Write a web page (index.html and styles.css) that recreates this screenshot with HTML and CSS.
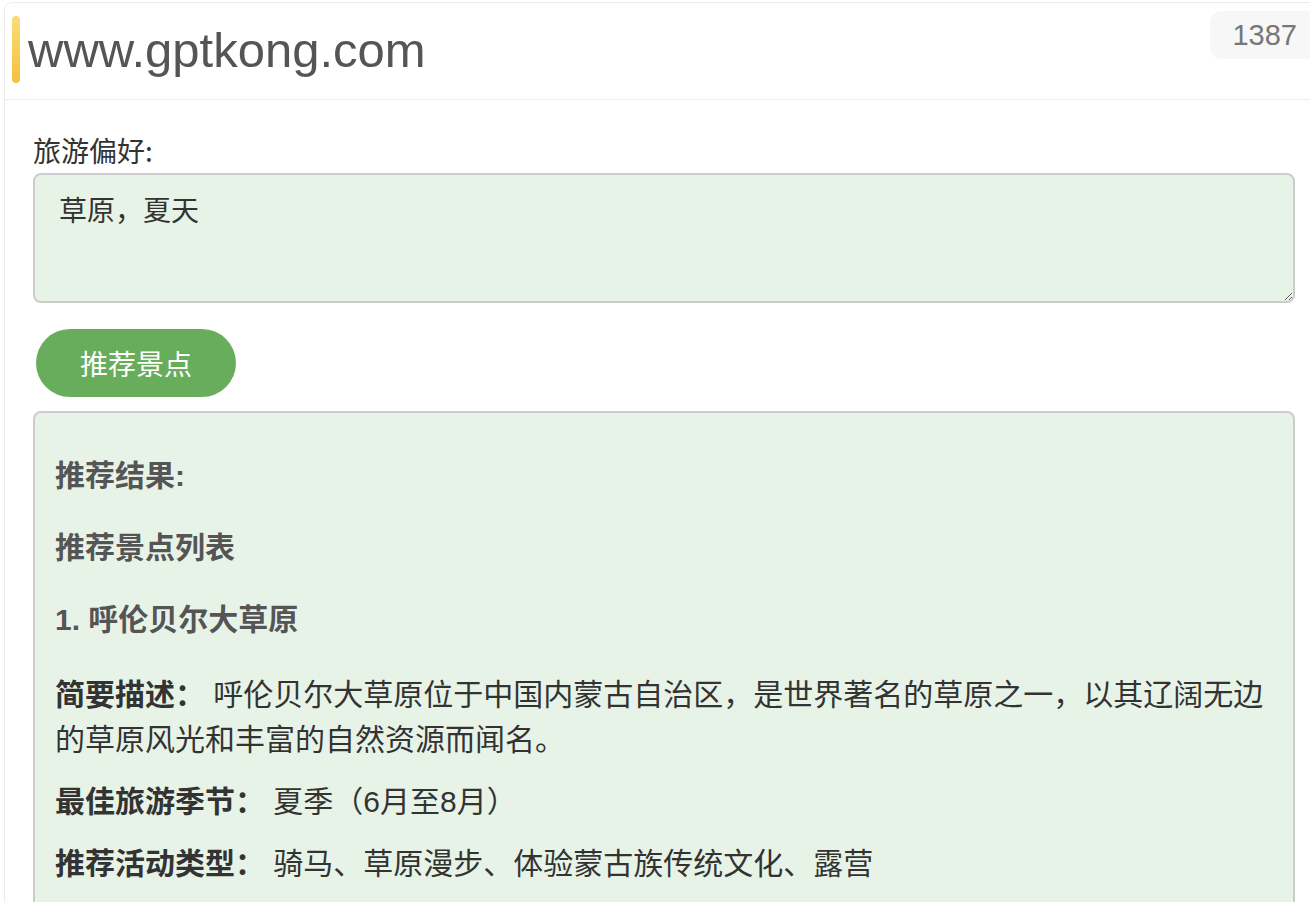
FILE: index.html
```html
<!DOCTYPE html>
<html lang="zh-CN">
<head>
<meta charset="utf-8">
<title>www.gptkong.com</title>
<link rel="stylesheet" href="styles.css">
</head>
<body>
<div class="card">
  <header class="card-header">
    <span class="accent-bar"></span>
    <h1 class="site-title">www.gptkong.com</h1>
    <span class="view-count">1387</span>
  </header>
  <main class="card-body">
    <label class="field-label" for="pref">旅游偏好:</label>
    <textarea id="pref" class="pref-input">草原，夏天</textarea>
    <button class="submit-btn" type="button">推荐景点</button>
    <section class="result-box">
      <p class="result-heading">推荐结果:</p>
      <p class="result-heading">推荐景点列表</p>
      <p class="result-heading item-title">1. 呼伦贝尔大草原</p>
      <ul class="detail-list">
        <li class="detail-row"><strong class="detail-label">简要描述：</strong> 呼伦贝尔大草原位于中国内蒙古自治区，是世界著名的草原之一，以其辽阔无边的草原风光和丰富的自然资源而闻名。</li>
        <li class="detail-row"><strong class="detail-label">最佳旅游季节：</strong> 夏季（6月至8月）</li>
        <li class="detail-row"><strong class="detail-label">推荐活动类型：</strong> 骑马、草原漫步、体验蒙古族传统文化、露营</li>
      </ul>
    </section>
  </main>
</div>
</body>
</html>
```

FILE: styles.css
```css
html, body {
  margin: 0;
  padding: 0;
  overflow: hidden;
  background: #ffffff;
}

body {
  font-family: "Liberation Sans", "Noto Sans CJK SC", sans-serif;
  color: #333333;
}

.card {
  position: relative;
  box-sizing: border-box;
  width: 1320px;
  margin: 2px 0 0 4px;
  border: 1px solid #ececec;
  border-radius: 8px;
  background: #ffffff;
}

.card-header {
  display: flex;
  align-items: flex-start;
  gap: 8px;
  padding: 13px 0 15px 7px;
  border-bottom: 1px solid #ececec;
}

.accent-bar {
  flex: none;
  width: 8px;
  height: 67px;
  border-radius: 4px;
  background: linear-gradient(180deg, #fadd78 0%, #f4bf3e 100%);
}

.site-title {
  margin: 0;
  padding-top: 1px;
  font-family: "Liberation Sans", sans-serif;
  font-size: 49px;
  line-height: 67px;
  font-weight: normal;
  color: #555555;
}

.view-count {
  position: absolute;
  top: 8px;
  right: 4px;
  height: 48px;
  padding: 0 22px;
  border-radius: 12px;
  background: #f7f7f7;
  font-family: "Liberation Sans", sans-serif;
  font-size: 29px;
  line-height: 48px;
  color: #777777;
}

.card-body {
  display: flex;
  flex-direction: column;
  align-items: flex-start;
  padding: 29px 28px 40px;
}

.field-label {
  display: block;
  margin-bottom: 2px;
  font-family: "Noto Sans CJK SC", sans-serif;
  font-size: 28px;
  line-height: 42px;
  color: #333333;
}

.pref-input {
  display: block;
  box-sizing: border-box;
  width: 100%;
  height: 130px;
  margin: 0;
  padding: 13px 24px;
  border: 2px solid #cccccc;
  border-radius: 8px;
  background: #e8f3e8;
  font-family: "Noto Sans CJK SC", sans-serif;
  font-size: 28px;
  line-height: 42px;
  color: #333333;
  resize: vertical;
}

.submit-btn {
  width: 200px;
  height: 68px;
  margin: 26px 0 0 3px;
  padding: 0;
  border: none;
  border-radius: 34px;
  background: #68ad5c;
  color: #ffffff;
  font-family: "Noto Sans CJK SC", sans-serif;
  font-size: 28px;
  line-height: 68px;
  cursor: pointer;
}

.result-box {
  box-sizing: border-box;
  width: 100%;
  margin-top: 14px;
  padding: 40px 20px 60px;
  border: 2px solid #cccccc;
  border-radius: 8px;
  background: #e8f3e8;
  font-family: "Liberation Sans", "Noto Sans CJK SC", sans-serif;
  font-size: 30px;
  line-height: 45px;
}

.result-heading {
  margin: 0 0 27px;
  font-weight: bold;
  color: #555555;
}

.result-heading.item-title {
  margin-bottom: 22px;
}

.detail-list {
  margin: 0;
  padding: 0;
  list-style: none;
}

.detail-row {
  padding: 8px 0;
  border-bottom: 1px solid #eaeeea;
  color: #333333;
}

.detail-label {
  font-weight: bold;
  color: #333333;
}
```
